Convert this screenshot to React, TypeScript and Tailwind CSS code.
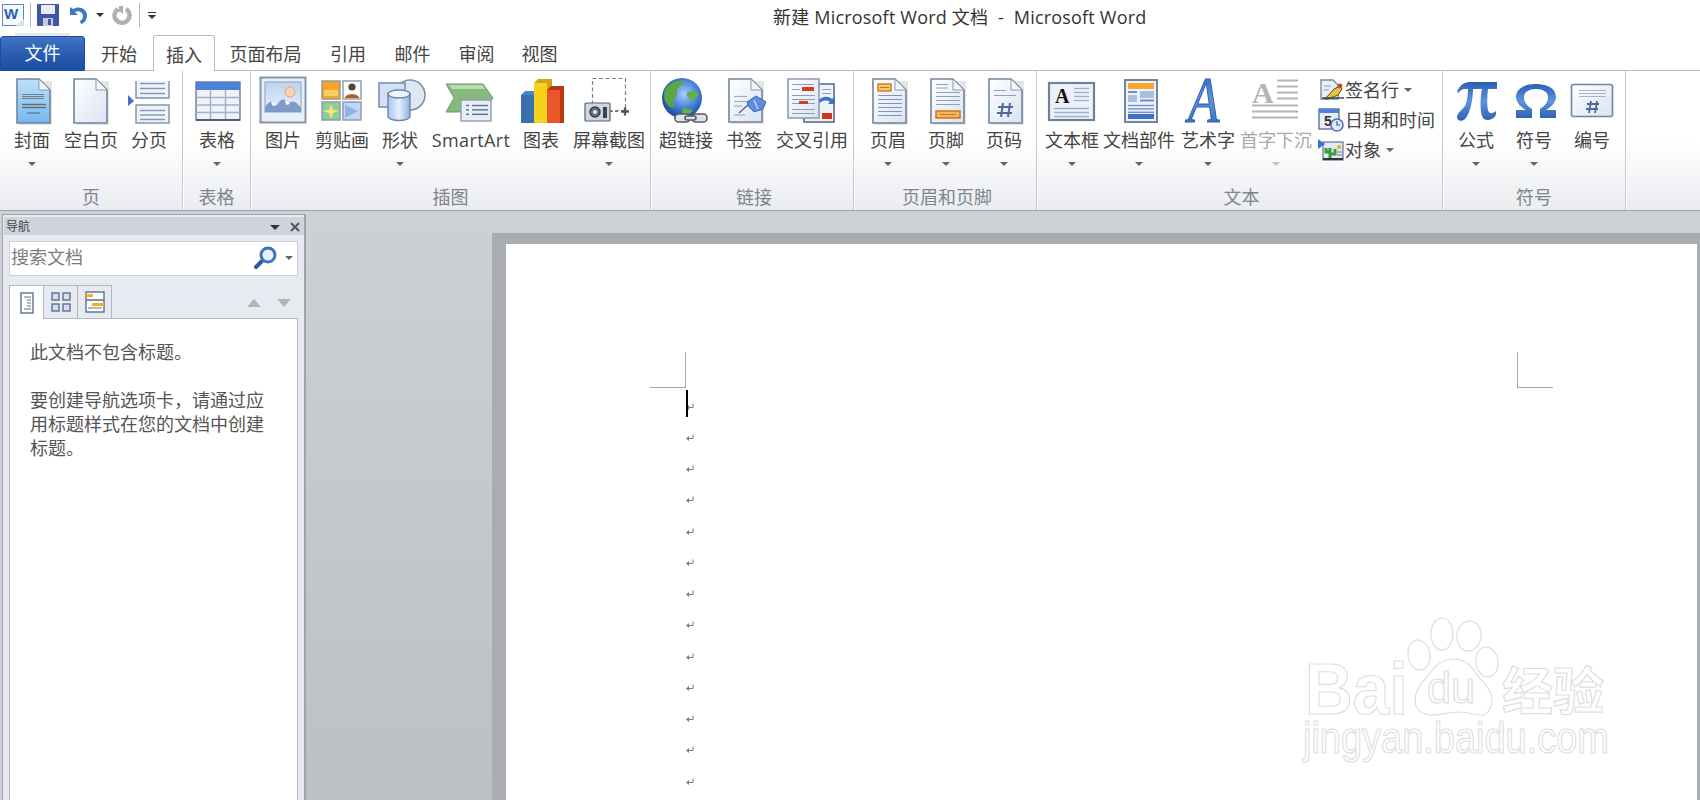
import type { ReactNode } from "react";

const cjk = "font-['Open_Sans','Noto_Sans_CJK_SC',sans-serif]";

// shared gradients for the ribbon icons
function Defs() {
  return (
    <svg className="absolute w-0 h-0">
      <defs>
        <linearGradient id="paper" x1="0" y1="0" x2="1" y2="1">
          <stop offset="0" stopColor="#ffffff" />
          <stop offset="1" stopColor="#d9e3f2" />
        </linearGradient>
        <linearGradient id="cover" x1="0" y1="0" x2="0" y2="1">
          <stop offset="0" stopColor="#bfe0fa" />
          <stop offset="1" stopColor="#74b8f0" />
        </linearGradient>
        <linearGradient id="sym" x1="0" y1="0" x2="0" y2="1">
          <stop offset="0" stopColor="#2a5fb0" />
          <stop offset="0.5" stopColor="#5f93dc" />
          <stop offset="1" stopColor="#2d62b6" />
        </linearGradient>
        <linearGradient id="sky" x1="0" y1="0" x2="0" y2="1">
          <stop offset="0" stopColor="#bcd4f4" />
          <stop offset="1" stopColor="#e8f0fa" />
        </linearGradient>
        <radialGradient id="globe" cx="0.55" cy="0.4" r="0.65">
          <stop offset="0" stopColor="#a8d0fa" />
          <stop offset="0.6" stopColor="#3a78d0" />
          <stop offset="1" stopColor="#123f8e" />
        </radialGradient>
        <linearGradient id="cyl" x1="0" y1="0" x2="1" y2="0">
          <stop offset="0" stopColor="#a9c4ec" />
          <stop offset="0.5" stopColor="#e6effb" />
          <stop offset="1" stopColor="#8fb0e0" />
        </linearGradient>
      </defs>
    </svg>
  );
}

const Icon = ({ children }: { children: ReactNode }) => (
  <svg width="60" height="48" viewBox="0 0 60 48" className="shrink-0 overflow-visible">
    {children}
  </svg>
);

const Doc = ({ x = 15, y = 3, w = 33, h = 44, fill = "url(#paper)" }: { x?: number; y?: number; w?: number; h?: number; fill?: string }) => (
  <g>
    <rect x={x + 2} y={y + 2} width={w} height={h} fill="#000" opacity="0.1" />
    <path d={`M${x} ${y}H${x + w - 11}L${x + w} ${y + 11}V${y + h}H${x}Z`} fill={fill} stroke="#72849b" strokeWidth="1.6" />
    <path d={`M${x + w - 11} ${y}V${y + 11}H${x + w}Z`} fill="#f4f7fb" stroke="#8a9aae" strokeWidth="1" />
  </g>
);

const Lines = ({ x, y, w, n, step = 4, color = "#8d9fc0", sw = 1 }: { x: number; y: number; w: number; n: number; step?: number; color?: string; sw?: number }) => (
  <g stroke={color} strokeWidth={sw}>
    {Array.from({ length: n }, (_, i) => (
      <line key={i} x1={x} x2={x + w} y1={y + i * step + 0.5} y2={y + i * step + 0.5} />
    ))}
  </g>
);

const Cover = () => (
  <Icon>
    <Doc fill="url(#cover)" />
    <Lines x={20} y={18} w={22} n={3} step={2} color="#6f7f92" />
    <Lines x={20} y={28} w={24} n={2} step={3} color="#6c6c6c" sw={1.4} />
    <line x1="25" x2="38" y1="37" y2="37" stroke="#6c7a8c" strokeWidth="1.4" />
  </Icon>
);

const Blank = () => (
  <Icon>
    <Doc x={13} />
  </Icon>
);

const PageBreak = () => (
  <Icon>
    <path d="M17 5V22H50V5Z" fill="#eef2f9" />
    <path d="M17 5V22H50V5" fill="none" stroke="#7f90a8" strokeWidth="1.4" />
    <Lines x={21} y={7} w={25} n={3} step={5} color="#8296b4" sw={1.4} />
    <rect x="17" y="29" width="33" height="18" fill="#eef2f9" stroke="#7f90a8" strokeWidth="1.4" />
    <Lines x={21} y={34} w={25} n={3} step={4.5} color="#8296b4" sw={1.4} />
    <path d="M9 19L15 25L9 30Z" fill="#3f6fd0" />
  </Icon>
);

const TableIcon = () => (
  <Icon>
    <rect x="9" y="6" width="44" height="38" fill="#eef2f9" stroke="#6a7c94" strokeWidth="1.4" />
    <rect x="9" y="6" width="44" height="8" fill="#4f7fdc" />
    <g stroke="#a2b1c6" strokeWidth="1.4">
      <line x1="23.5" x2="23.5" y1="14" y2="44" />
      <line x1="38.5" x2="38.5" y1="14" y2="44" />
      <line x1="9" x2="53" y1="21.5" y2="21.5" />
      <line x1="9" x2="53" y1="29" y2="29" />
      <line x1="9" x2="53" y1="36.5" y2="36.5" />
    </g>
    <line x1="9" x2="53" y1="44" y2="44" stroke="#33496a" strokeWidth="1.6" />
  </Icon>
);

const Picture = () => (
  <Icon>
    <rect x="7.5" y="1.5" width="45" height="45" fill="#e4eff7" stroke="#8593a6" strokeWidth="2" />
    <rect x="12" y="6" width="36" height="30" fill="url(#sky)" stroke="#8ea0ba" strokeWidth="1" />
    <circle cx="37" cy="16" r="5" fill="#f9d3b4" stroke="#f0a26a" strokeWidth="1" />
    <path d="M12 36V31C17 24 20 25 24 29C28 22 32 22 36 27C40 24 44 26 48 32V36Z" fill="#7d9ac8" />
    <path d="M18 27C20 25 22 26 24 29L20 30ZM32 24C34 24 36 26 37 28L33 29Z" fill="#f4f7fb" />
  </Icon>
);

const ClipArt = () => (
  <Icon>
    <rect x="10" y="5" width="18" height="18" fill="#f7a623" stroke="#8d97a6" strokeWidth="1.4" />
    <rect x="12" y="14" width="14" height="6" fill="#f6d25c" />
    <rect x="31" y="5" width="18" height="18" fill="#fff" stroke="#8d97a6" strokeWidth="1.4" />
    <circle cx="40" cy="11" r="3.6" fill="#50473f" />
    <path d="M33 22C33 17 47 17 47 22Z" fill="#b65a25" />
    <rect x="10" y="26" width="18" height="18" fill="#8ccf9a" stroke="#8d97a6" strokeWidth="1.4" />
    <path d="M19 28L21 34L27 35L21 37L19 43L17 37L11 35L17 34Z" fill="#f5e77d" />
    <rect x="31" y="26" width="18" height="18" fill="#c2d7f6" stroke="#8d97a6" strokeWidth="1.4" />
    <path d="M33 29L46 35L33 42Z" fill="#8fb3ea" />
  </Icon>
);

const Shapes = () => (
  <Icon>
    <circle cx="40" cy="19" r="15" fill="#dfe7f2" stroke="#7f90a6" strokeWidth="1.6" />
    <rect x="9" y="7" width="26" height="24" fill="#cfe0f7" stroke="#7f90a6" strokeWidth="1.6" />
    <path d="M18 18V40C18 46 40 46 40 40V18Z" fill="url(#cyl)" stroke="#6f85a8" strokeWidth="1.4" />
    <ellipse cx="29" cy="18" rx="11" ry="4" fill="#eef4fc" stroke="#6f85a8" strokeWidth="1.4" />
  </Icon>
);

const SmartArtIcon = () => (
  <Icon>
    <path d="M5 8H42L52 22L42 36H5L13 22Z" fill="#86b97e" stroke="#6f9a6a" strokeWidth="1" />
    <path d="M8 9H41L44 13H11Z" fill="#bcdcb2" />
    <rect x="20" y="24" width="30" height="21" fill="#e9eef5" stroke="#8d9db2" strokeWidth="1.4" />
    <Lines x={31} y={29} w={16} n={3} step={4.4} color="#55708f" sw={1.4} />
    <Lines x={25} y={29} w={3} n={3} step={4.4} color="#55708f" sw={1.4} />
  </Icon>
);

const Chart = () => (
  <Icon>
    <path d="M10 19L14 15H27V47H10Z" fill="#4d86c6" />
    <rect x="10" y="19" width="13" height="28" fill="#3a70ae" />
    <path d="M23 7L27 3H41V47H23Z" fill="#d2a314" />
    <rect x="23" y="7" width="13" height="40" fill="#f6d21c" />
    <path d="M36 14L40 10H53V47H36Z" fill="#b83a12" />
    <rect x="36" y="14" width="13" height="33" fill="#e8562a" />
  </Icon>
);

const Screenshot = () => (
  <Icon>
    <rect x="13.5" y="2.5" width="33" height="32" fill="none" stroke="#77818f" strokeWidth="1.2" strokeDasharray="4 2.5" />
    <rect x="6" y="27" width="25" height="18" rx="1" fill="#cfd6de" stroke="#59616c" strokeWidth="1.2" />
    <circle cx="16" cy="36" r="5" fill="#5f7288" stroke="#2f3a46" strokeWidth="1.4" />
    <circle cx="16" cy="36" r="2" fill="#dfe8f2" />
    <rect x="24" y="31" width="4" height="11" fill="#3d434b" />
    <line x1="31" x2="41" y1="35.5" y2="35.5" stroke="#707070" strokeWidth="1.2" strokeDasharray="3 2" />
    <path d="M42 35.5H50M46 31.5V39.5" stroke="#4b5563" strokeWidth="2.4" />
  </Icon>
);

const Hyperlink = () => (
  <Icon>
    <circle cx="26" cy="22" r="20" fill="url(#globe)" />
    <path d="M10 12C15 6 24 3 28 6C27 10 20 10 21 15C22 20 16 22 18 28C19 33 14 32 11 28C8 24 7 17 10 12Z" fill="#5da83e" />
    <path d="M31 17C35 14 41 15 43 18C41 22 38 22 36 25C34 22 30 21 31 17ZM27 32C31 33 35 33 37 35C33 39 28 40 26 38Z" fill="#64b044" />
    <g fill="#dfe3e8" stroke="#565c64" strokeWidth="1.6">
      <rect x="19" y="38" width="15" height="8" rx="3.6" />
      <rect x="36" y="38" width="15" height="8" rx="3.6" />
      <rect x="29" y="40" width="11" height="4" rx="2" />
    </g>
  </Icon>
);

const Bookmark = () => (
  <Icon>
    <Doc y={3} h={43} />
    <Lines x={20} y={20} w={13} n={2} step={5} color="#a3aebd" sw={1.2} />
    <line x1="20" x2="28" y1="30" y2="30" stroke="#a3aebd" strokeWidth="1.2" />
    <line x1="20" x2="31" y1="39" y2="39" stroke="#a3aebd" strokeWidth="1.2" />
    <path d="M25 37L35 28" stroke="#4d6fb8" strokeWidth="1.6" />
    <path d="M33 26L42 20L52 26L49 33L40 36L35 31Z" fill="#5e8de0" stroke="#3e66b4" strokeWidth="1" />
    <path d="M40 24L44 33" stroke="#c5d8f6" strokeWidth="1.4" />
  </Icon>
);

const CrossRef = () => (
  <Icon>
    <rect x="22" y="8" width="30" height="38" fill="#eef2f9" stroke="#5d6f88" strokeWidth="1.6" />
    <rect x="40" y="37" width="10" height="6" fill="#c93a16" />
    <Lines x={40} y={13} w={9} n={2} step={4} color="#8d9fc0" />
    <path d="M6 3H37V42H6Z" fill="url(#paper)" stroke="#8b9bb2" strokeWidth="1.6" />
    <rect x="20" y="11" width="12" height="4" fill="#d93d18" />
    <Lines x={10} y={8} w={22} n={1} color="#8d9fc0" />
    <Lines x={10} y={13} w={8} n={1} color="#8d9fc0" />
    <Lines x={10} y={19} w={23} n={3} step={4} color="#8d9fc0" />
    <rect x="17" y="25" width="9" height="3" fill="#d93d18" />
    <Lines x={10} y={33} w={23} n={2} step={4} color="#8d9fc0" />
    <path d="M37 24C41 20 46 20 50 23L53 21V28H46L48 26C45 24 41 24 38 27Z" fill="#3f72cc" />
  </Icon>
);

const Header = () => (
  <Icon>
    <Doc />
    <rect x="20" y="8" width="13" height="7" fill="#f5c77a" stroke="#cf7c12" strokeWidth="1.4" />
    <line x1="22" x2="31" y1="11.5" y2="11.5" stroke="#c57a1c" />
    <Lines x={20} y={19} w={24} n={6} step={4} color="#7f94bf" />
  </Icon>
);

const Footer = () => (
  <Icon>
    <Doc />
    <Lines x={20} y={8} w={12} n={2} step={3.5} color="#8d9fc0" />
    <Lines x={20} y={16} w={24} n={4} step={4} color="#8d9fc0" />
    <rect x="20" y="35" width="24" height="7" fill="#f5b75c" stroke="#c96f10" strokeWidth="1.4" />
    <line x1="24" x2="40" y1="38.5" y2="38.5" stroke="#c57a1c" />
  </Icon>
);

const PageNum = () => (
  <Icon>
    <Doc />
    <Lines x={20} y={14} w={12} n={1} color="#8d9fc0" />
    <Lines x={20} y={19} w={22} n={1} color="#8d9fc0" />
    <path d="M29 27L27 41M36 27L34 41M24 31H39M23 37H38" stroke="#4f6a96" strokeWidth="2" />
  </Icon>
);

const TextBox = () => (
  <Icon>
    <rect x="7" y="7" width="45" height="37" fill="#eef2f8" stroke="#6f8199" strokeWidth="2.2" />
    <text x="13" y="27" fontFamily="'Liberation Serif',serif" fontWeight="700" fontSize="20" fill="#111">A</text>
    <Lines x={32} y={12} w={15} n={4} step={4} color="#9db0cc" sw={1.4} />
    <Lines x={12} y={32} w={35} n={3} step={4} color="#9db0cc" sw={1.4} />
  </Icon>
);

const Parts = () => (
  <Icon>
    <rect x="16" y="4" width="32" height="42" fill="#eef2f8" stroke="#72849b" strokeWidth="2" />
    <rect x="19" y="7" width="26" height="6" fill="#f9a62e" />
    <rect x="19" y="15" width="9" height="2" fill="#6e8fc7" />
    <rect x="31" y="15" width="14" height="7" fill="#a9bfe0" />
    <rect x="19" y="19" width="9" height="7" fill="#a9bfe0" />
    <Lines x={31} y={24} w={14} n={1} color="#6e8fc7" sw={2} />
    <Lines x={19} y={29} w={26} n={3} step={3.4} color="#6e8fc7" sw={1.4} />
    <rect x="19" y="38" width="26" height="5" fill="#3f6fc8" />
  </Icon>
);

const WordArt = () => (
  <Icon>
    <g transform="translate(10 46) scale(0.78 1)">
      <text x="0" y="0" fontFamily="'Liberation Serif',serif" fontStyle="italic" fontSize="66" fill="url(#sym)" stroke="#2f62b4" strokeWidth="1.2">A</text>
    </g>
  </Icon>
);

const DropCap = () => (
  <Icon>
    <text x="6" y="27" fontFamily="'Liberation Serif',serif" fontWeight="700" fontSize="30" fill="#b4b4b4">A</text>
    <Lines x={31} y={4} w={21} n={4} step={6} color="#b4b4b4" sw={2} />
    <Lines x={6} y={29} w={46} n={3} step={6} color="#b4b4b4" sw={2} />
  </Icon>
);

const Pi = () => (
  <Icon>
    <path d="M11 16C13 10 18 6 24 6H51V13H42C41 22 41 30 42 34C43 38 46 38 50 35V39C46 45 38 46 36 40C34 34 34 22 36 13H27C27 24 24 38 19 43C16 46 11 45 11 41C11 37 16 34 19 30C21 26 22 18 22 13H20C16 13 14 14 13 17Z" fill="url(#sym)" />
  </Icon>
);

const Omega = () => (
  <Icon>
    <path d="M12 42V34H22C15 30 12 25 12 21C12 13 20 8 32 8C44 8 52 13 52 21C52 25 49 30 42 34H52V42H36V33C41 30 44 26 44 21C44 16 39 13 32 13C25 13 20 16 20 21C20 26 23 30 28 33V42Z" fill="url(#sym)" />
  </Icon>
);

const EqNum = () => (
  <Icon>
    <rect x="9.5" y="8.5" width="41" height="32" rx="2" fill="url(#paper)" stroke="#6d84a6" strokeWidth="1.6" />
    <Lines x={17} y={14} w={27} n={3} step={3} color="#a5b4cc" />
    <path d="M29 25L27 37M35 25L33 37M25 28H37M24 33H36" stroke="#4f6a96" strokeWidth="1.8" />
  </Icon>
);

const Caret = ({ className = "border-t-[#666]" }: { className?: string }) => (
  <span className={`block w-0 h-0 border-x-[4px] border-t-[4px] border-x-transparent ${className}`} />
);

type Btn = { label: string; w: string; icon: ReactNode; arrow?: boolean; off?: boolean; wide?: boolean };

function RibbonButton({ label, w, icon, arrow, off, wide }: Btn) {
  return (
    <div className={`flex flex-col items-center pt-[5px] shrink-0 ${w}`}>
      {icon}
      <span className={`mt-[3px] h-[26px] leading-[26px] text-[18px] whitespace-nowrap ${off ? "text-[#a8a8a8]" : "text-[#444]"} ${wide ? "tracking-[0.4px]" : ""}`}>{label}</span>
      {arrow && (
        <span className="mt-[9px]">
          <Caret className={off ? "border-t-[#c4c4c4]" : "border-t-[#666]"} />
        </span>
      )}
    </div>
  );
}

function Group({ label, w, pl, lp = "", children }: { label: string; w: string; pl: string; lp?: string; children: ReactNode }) {
  return (
    <div className={`flex flex-col shrink-0 border-r border-[#c6cad0] shadow-[1px_0_0_#fff] ${w}`}>
      <div className={`flex flex-1 min-h-0 ${pl}`}>{children}</div>
      <div className={`h-[26px] leading-[26px] text-center text-[18px] text-[#7f858d] ${lp}`}>{label}</div>
    </div>
  );
}

const SignIcon = () => (
  <svg width="26" height="24" viewBox="0 0 26 24">
    <path d="M3 2H15L20 7V21H3Z" fill="#e9eef6" stroke="#7b8ca3" strokeWidth="1.4" />
    <path d="M6 8H13M6 12H11" stroke="#8b9bb2" />
    <path d="M7 21L16 11L22 8L24 11L20 17L10 21Z" fill="#e7c23c" stroke="#5b4a1c" strokeWidth="1" />
    <circle cx="22" cy="8" r="2.4" fill="#c64a2a" />
    <path d="M4 20H26" stroke="#3b3b3b" strokeWidth="1.4" />
  </svg>
);

const DateIcon = () => (
  <svg width="26" height="24" viewBox="0 0 26 24">
    <rect x="1" y="1" width="20" height="20" fill="#e9edf3" stroke="#5e7390" strokeWidth="1.4" />
    <rect x="1" y="1" width="20" height="4" fill="#4f7fdc" />
    <text x="6" y="18" fontFamily="'Liberation Sans',sans-serif" fontWeight="700" fontSize="14" fill="#333">5</text>
    <circle cx="19" cy="17" r="6" fill="#dfe9f7" stroke="#4f74b4" strokeWidth="1.6" />
    <path d="M19 13V17H22" stroke="#3f5f9c" strokeWidth="1.2" fill="none" />
  </svg>
);

const ObjectIcon = () => (
  <svg width="26" height="24" viewBox="0 0 26 24">
    <rect x="5" y="4" width="20" height="18" fill="#e3e9f2" stroke="#5e7390" strokeWidth="1.2" />
    <path d="M0 1L7 6L0 11Z" fill="#3f6fd0" />
    <path d="M12 20V10M12 14H8V10M12 16H17V11" stroke="#3f9a3a" strokeWidth="3" fill="none" />
    <circle cx="21" cy="9" r="2" fill="#e8a830" />
    <path d="M19 14H24M19 17H24" stroke="#687a92" />
    <rect x="5" y="20" width="20" height="2" fill="#333" />
  </svg>
);

const SmallBtn = ({ icon, label, arrow }: { icon: ReactNode; label: string; arrow?: boolean }) => (
  <div className="flex items-center h-[30px] gap-[1px]">
    {icon}
    <span className="text-[18px] leading-[30px] text-[#444] whitespace-nowrap">{label}</span>
    {arrow && (
      <span className="ml-[4px]">
        <Caret />
      </span>
    )}
  </div>
);

const tabs = [
  { label: "开始", w: "w-[68px]" },
  { label: "插入", w: "w-[62px]", active: true },
  { label: "页面布局", w: "w-[101px]" },
  { label: "引用", w: "w-[64px]" },
  { label: "邮件", w: "w-[65px]" },
  { label: "审阅", w: "w-[63px]" },
  { label: "视图", w: "w-[63px]" },
];

function QuickAccess() {
  return (
    <div className="flex items-center w-[773px] h-[36px] shrink-0 pl-[2px] pb-[6px]">
      <svg width="22" height="24" viewBox="0 0 22 24">
        <rect x="0.5" y="1.5" width="21" height="21" fill="#f7f9fd" stroke="#5b86c4" />
        <text x="2" y="16" fontFamily="'Liberation Sans',sans-serif" fontWeight="700" fontSize="15" fill="#1f5fb8">W</text>
        <path d="M14 23L22 16V23Z" fill="#d7deea" />
      </svg>
      <span className="ml-[6px] w-px h-[24px] bg-[#b4b8bd]" />
      <svg className="ml-[6px]" width="22" height="22" viewBox="0 0 22 22">
        <rect width="22" height="22" rx="1" fill="#4256a6" />
        <rect x="4" y="1" width="14" height="9" fill="#e8ecf8" />
        <rect x="6" y="14" width="10" height="8" fill="#c6cbe0" />
        <rect x="11" y="15" width="3" height="6" fill="#4256a6" />
      </svg>
      <svg className="ml-[10px]" width="18" height="18" viewBox="0 0 18 18">
        <path d="M1 1V9H9L6 6C9 4 14 6 14 10C14 12 13 14 11 15L12 18C16 17 18 13 18 9C18 3 10 -1 4 3Z" fill="#3c76c8" />
      </svg>
      <span className="ml-[9px]">
        <Caret className="border-t-[#333]" />
      </span>
      <svg className="ml-[8px]" width="20" height="20" viewBox="0 0 20 20">
        <path d="M6 4A7.5 7.5 0 1 0 14 4" fill="none" stroke="#b0b0b0" strokeWidth="4.4" />
        <path d="M7 1H11V9L8.5 7H5V4H7Z" fill="#b0b0b0" />
      </svg>
      <span className="ml-[7px] w-px h-[24px] bg-[#b4b8bd]" />
      <span className="ml-[8px] flex flex-col items-center gap-[2px]">
        <span className="block w-[8px] h-[1px] bg-[#333]" />
        <Caret className="border-t-[#333]" />
      </span>
    </div>
  );
}

function TabBar() {
  return (
    <div className="flex items-end h-[35px] border-b border-[#b6babf]">
      <div className="relative flex items-center justify-center w-[85px] h-[35px] -mb-px rounded-t-[3px] border border-[#1c4d9c] bg-gradient-to-b from-[#3f74c6] via-[#2a5dae] to-[#1b4fa3] text-white text-[18px]">
        <span className="absolute left-[14px] top-[-4px] w-[55px] h-[3px] bg-[#e3e8ef]" />
        文件
      </div>
      {tabs.map((t) => (
        <div
          key={t.label}
          className={`flex items-center justify-center pt-[3px] text-[18px] text-[#444] ${t.w} ${t.active ? "relative z-10 -mb-px h-[36px] bg-white border border-b-0 border-[#b6babf] rounded-t-[3px]" : "h-[35px]"}`}
        >
          {t.label}
        </div>
      ))}
    </div>
  );
}

function Ribbon() {
  return (
    <div className="flex h-[140px] border-b border-[#9ea2a8] bg-gradient-to-b from-white from-50% to-[#eaecf0]">
      <Group label="页" w="w-[183px]" pl="pl-[2px]">
        <RibbonButton label="封面" w="w-[60px]" icon={<Cover />} arrow />
        <RibbonButton label="空白页" w="w-[58px]" icon={<Blank />} />
        <RibbonButton label="分页" w="w-[58px]" icon={<PageBreak />} />
      </Group>
      <Group label="表格" w="w-[68px]" pl="pl-[4px]">
        <RibbonButton label="表格" w="w-[60px]" icon={<TableIcon />} arrow />
      </Group>
      <Group label="插图" w="w-[400px]" pl="pl-[2px]">
        <RibbonButton label="图片" w="w-[60px]" icon={<Picture />} />
        <RibbonButton label="剪贴画" w="w-[58px]" icon={<ClipArt />} />
        <RibbonButton label="形状" w="w-[58px]" icon={<Shapes />} arrow />
        <RibbonButton label="SmartArt" w="w-[84px]" icon={<SmartArtIcon />} wide />
        <RibbonButton label="图表" w="w-[56px]" icon={<Chart />} />
        <RibbonButton label="屏幕截图" w="w-[80px]" icon={<Screenshot />} arrow />
      </Group>
      <Group label="链接" w="w-[203px]" pl="pl-[4px]" lp="pl-[4px]">
        <RibbonButton label="超链接" w="w-[62px]" icon={<Hyperlink />} />
        <RibbonButton label="书签" w="w-[54px]" icon={<Bookmark />} />
        <RibbonButton label="交叉引用" w="w-[82px]" icon={<CrossRef />} />
      </Group>
      <Group label="页眉和页脚" w="w-[183px]" pl="pl-[6px]" lp="pl-[4px]">
        <RibbonButton label="页眉" w="w-[56px]" icon={<Header />} arrow />
        <RibbonButton label="页脚" w="w-[60px]" icon={<Footer />} arrow />
        <RibbonButton label="页码" w="w-[56px]" icon={<PageNum />} arrow />
      </Group>
      <Group label="文本" w="w-[406px]" pl="pl-[1px]" lp="pl-[4px]">
        <RibbonButton label="文本框" w="w-[68px]" icon={<TextBox />} arrow />
        <RibbonButton label="文档部件" w="w-[66px]" icon={<Parts />} arrow />
        <RibbonButton label="艺术字" w="w-[72px]" icon={<WordArt />} arrow />
        <RibbonButton label="首字下沉" w="w-[64px]" icon={<DropCap />} arrow off />
        <div className="flex flex-col ml-[10px] pt-[4px]">
          <SmallBtn icon={<SignIcon />} label="签名行" arrow />
          <SmallBtn icon={<DateIcon />} label="日期和时间" />
          <SmallBtn icon={<ObjectIcon />} label="对象" arrow />
        </div>
      </Group>
      <Group label="符号" w="w-[183px]" pl="pl-[4px]">
        <RibbonButton label="公式" w="w-[58px]" icon={<Pi />} arrow />
        <RibbonButton label="符号" w="w-[58px]" icon={<Omega />} arrow />
        <RibbonButton label="编号" w="w-[58px]" icon={<EqNum />} />
      </Group>
    </div>
  );
}

function NavPane() {
  return (
    <div className="flex flex-col w-[304px] ml-[2px] shrink-0 bg-[#e7eaf0] border-t border-l border-r-2 border-[#a0a4a9] pt-[2px] pl-px">
      <div className="flex items-center w-[300px] h-[18px] bg-[#cdd4dc] pl-[2px] pt-[2px] text-[12px] text-[#444]">
        <span>导航</span>
        <span className="ml-auto mr-[10px]">
          <span className="block w-0 h-0 border-x-[5px] border-t-[5px] border-x-transparent border-t-[#333]" />
        </span>
        <svg className="mr-[4px]" width="10" height="10" viewBox="0 0 10 10">
          <path d="M1 1L9 9M9 1L1 9" stroke="#555" strokeWidth="2" />
        </svg>
      </div>
      <div className="flex items-center w-[289px] h-[35px] ml-[5px] mt-[6px] bg-white border border-[#ccd0d6] pl-[1px] pb-[2px] text-[18px] text-[#7d7d7d]">
        <span>搜索文档</span>
        <svg className="ml-auto" width="24" height="24" viewBox="0 0 24 24">
          <path d="M8 15L2 21" stroke="#2b5a9c" strokeWidth="4" strokeLinecap="round" />
          <circle cx="14" cy="9" r="7" fill="#e8f1fb" stroke="#3d74bc" strokeWidth="3" />
        </svg>
        <span className="ml-[7px] mr-[4px]">
          <Caret />
        </span>
      </div>
      <div className="flex items-end w-[289px] h-[34px] ml-[5px] mt-[8px]">
        <div className="flex items-center justify-center relative z-10 w-[35px] h-[34px] -mb-px bg-white border border-b-0 border-[#b4b8bd]">
          <svg width="14" height="22" viewBox="0 0 14 22">
            <rect x="1" y="1" width="12" height="20" fill="#fff" stroke="#5d708a" strokeWidth="1.4" />
            <path d="M4 5H11M7 8H11M7 11H11M7 14H11M4 17H11" stroke="#5d708a" />
          </svg>
        </div>
        <div className="flex items-center justify-center w-[34px] h-[33px] border-t border-r border-[#b4b8bd]">
          <svg width="20" height="20" viewBox="0 0 20 20" fill="#d5def0" stroke="#5d708a" strokeWidth="1.4">
            <rect x="1" y="1" width="7" height="7" />
            <rect x="12" y="1" width="7" height="7" />
            <rect x="1" y="12" width="7" height="7" />
            <rect x="12" y="12" width="7" height="7" />
          </svg>
        </div>
        <div className="flex items-center justify-center w-[34px] h-[33px] border-t border-r border-[#b4b8bd]">
          <svg width="20" height="22" viewBox="0 0 20 22">
            <rect x="1" y="1" width="18" height="20" fill="#fff" stroke="#5d708a" strokeWidth="1.4" />
            <rect x="1" y="3" width="7" height="3" fill="#f0b020" />
            <path d="M1 9H19" stroke="#5d708a" strokeWidth="1.6" />
            <rect x="7" y="12" width="12" height="3" fill="#f0b020" />
            <path d="M3 17H17" stroke="#5d708a" />
          </svg>
        </div>
        <div className="flex items-center gap-[16px] ml-auto mr-[7px] mb-[11px]">
          <span className="block w-0 h-0 border-x-[7px] border-b-[8px] border-x-transparent border-b-[#b4b4b4]" />
          <span className="block w-0 h-0 border-x-[7px] border-t-[8px] border-x-transparent border-t-[#b4b4b4]" />
        </div>
      </div>
      <div className="flex-1 w-[289px] ml-[5px] bg-white border border-b-0 border-[#b4b8bd] pl-[20px] pt-[21px] text-[18px] leading-[24px] text-[#555]">
        <p className="mb-[24px]">此文档不包含标题。</p>
        <p className="w-[236px]">要创建导航选项卡，请通过应用标题样式在您的文档中创建标题。</p>
      </div>
    </div>
  );
}

const ReturnMark = () => (
  <svg width="8" height="8" viewBox="0 0 8 8" className="block">
    <path d="M7 0.5V4.5H2" fill="none" stroke="#7a7a7a" />
    <path d="M0 4.5L3 2V7Z" fill="#7a7a7a" />
  </svg>
);

// paw and lettering of the image watermark, in the corner of the page
function Watermark() {
  return (
    <svg className="absolute left-[774px] top-[356px]" width="420" height="200" viewBox="0 0 420 200" fill="#fff" stroke="#dedede" strokeWidth="1.2">
      <ellipse cx="139" cy="55" rx="11" ry="15" transform="rotate(-8 139 55)" />
      <ellipse cx="162" cy="34" rx="11" ry="16" />
      <ellipse cx="189" cy="36" rx="12" ry="15" transform="rotate(8 189 36)" />
      <ellipse cx="207" cy="62" rx="11" ry="15" transform="rotate(-8 207 62)" />
      <path d="M173 59C160 59 152 70 146 78C138 86 135 94 135 101C135 111 144 115 153 115C162 115 170 112 178 112C186 112 195 115 203 115C207 115 212 108 212 100C212 88 200 80 195 72C190 64 184 59 173 59Z" />
      <text x="25" y="114" textLength="103" lengthAdjust="spacingAndGlyphs" fontFamily="'Liberation Sans',sans-serif" fontWeight="700" fontSize="72">Bai</text>
      <text x="147" y="103" textLength="48" lengthAdjust="spacingAndGlyphs" fontFamily="'Liberation Sans',sans-serif" fontSize="44">du</text>
      <text x="222" y="110" textLength="102" lengthAdjust="spacingAndGlyphs" fontFamily="'Noto Sans CJK SC',sans-serif" fontWeight="700" fontSize="51">经验</text>
      <text x="23" y="153" textLength="306" lengthAdjust="spacingAndGlyphs" fontFamily="'Liberation Sans',sans-serif" fontSize="44">jingyan.baidu.com</text>
    </svg>
  );
}

function Document() {
  return (
    <div className="flex-1 min-w-0 pl-[186px] pt-[19px] bg-gradient-to-b from-[#cdd0d5] to-[#bcc0c5]">
      <div className="h-full bg-[#a9adb2] pl-[14px] pt-[11px] pr-[3px]">
        <div className="relative h-full overflow-hidden bg-white pl-[144px] pt-[108px]">
          <div className="flex justify-between w-[903px]">
            <span className="w-[36px] h-[36px] border-r border-b border-[#a8a8a8]" />
            <span className="w-[36px] h-[36px] border-l border-b border-[#a8a8a8]" />
          </div>
          <div className="ml-[36px] pt-[1px]">
            {Array.from({ length: 13 }, (_, i) => (
              <div key={i} className="flex items-center h-[31.25px] pt-[4px]">
                <ReturnMark />
              </div>
            ))}
          </div>
          <span className="absolute left-[180px] top-[146px] w-[2px] h-[27px] bg-black" />
          <Watermark />
        </div>
      </div>
    </div>
  );
}

export default function App() {
  return (
    <div className={`relative flex flex-col w-[1700px] h-[800px] overflow-hidden bg-white ${cjk}`}>
      <Defs />
      <div className="flex items-center h-[36px]">
        <QuickAccess />
        <span className="pb-[2px] text-[18px] tracking-[0.2px] text-[#333] whitespace-pre">新建 Microsoft Word 文档  -  Microsoft Word</span>
      </div>
      <TabBar />
      <Ribbon />
      <div className="flex flex-1 min-h-0 pt-[3px] bg-[#cdd0d5]">
        <NavPane />
        <Document />
      </div>
    </div>
  );
}
